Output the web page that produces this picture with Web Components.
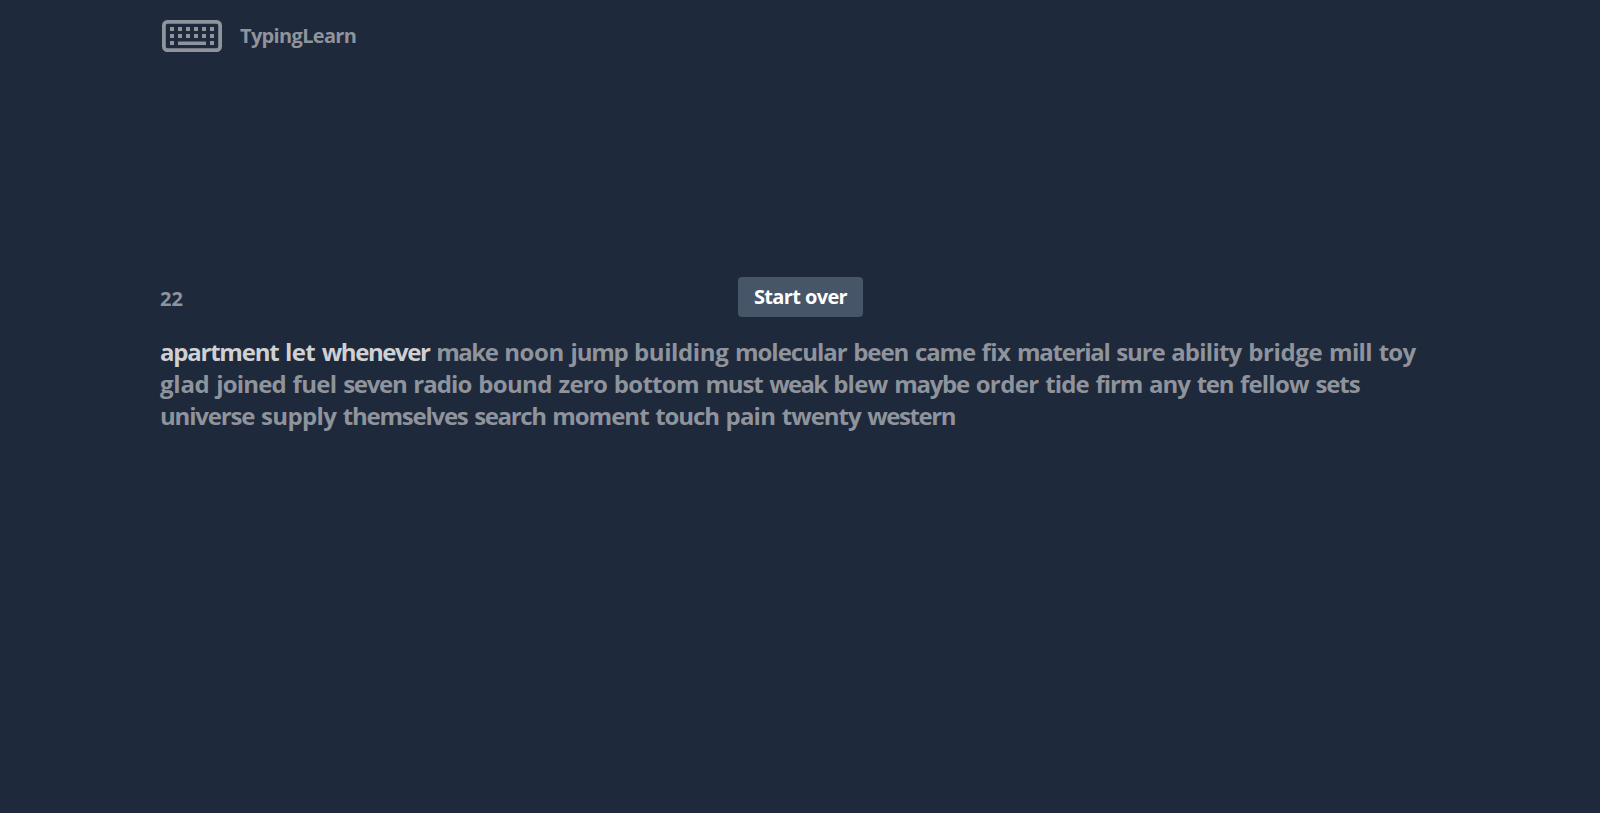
<!DOCTYPE html>
<html lang="en">
<head>
<meta charset="utf-8">
<title>TypingLearn</title>
<style>
html,body{margin:0;height:100%;background:#1e293b;overflow:hidden}
body{font-family:"Open Sans","Noto Sans",sans-serif;font-weight:700;color:#8f939b}
</style>
</head>
<body>
<typing-app></typing-app>
<script>
const define = (name, html, setup) => customElements.define(name, class extends HTMLElement {
  constructor() {
    super();
    const t = document.createElement('template');
    t.innerHTML = html;
    this.attachShadow({mode: 'open'}).append(t.content.cloneNode(true));
  }
  connectedCallback() { if (setup) setup(this); }
});

define('keyboard-icon', `
<style>:host{display:block;width:64px;height:40px}svg{display:block}</style>
<svg width="64" height="40" viewBox="0 0 64 40" fill="currentColor">
<rect x="3.9" y="5.9" width="56.2" height="28.2" rx="3.5" fill="none" stroke="currentColor" stroke-width="3.8"/>
<path d="M10 11h4v4h-4zM18 11h4v4h-4zM26 11h4v4h-4zM34 11h4v4h-4zM42 11h4v4h-4zM50 11h4v4h-4zM10 18h4v4h-4zM18 18h4v4h-4zM26 18h4v4h-4zM34 18h4v4h-4zM42 18h4v4h-4zM50 18h4v4h-4zM10 25h4v4h-4zM18 25.4h28v3.6H18zM50 25h4v4h-4z"/>
</svg>`);

define('app-header', `
<style>
:host{display:flex;align-items:center;gap:16px;height:72px}
.name{font-size:20px;line-height:28px;padding-bottom:1px;letter-spacing:-.67px}
</style>
<keyboard-icon></keyboard-icon><div class="name"><slot></slot></div>`);

define('start-button', `
<style>
:host{display:block}
button{display:block;box-sizing:border-box;width:125px;height:40px;padding:0 0 1px 1px;border:0;border-radius:4px;background:#475569;color:#fff;font:inherit;font-size:20px;line-height:39px;letter-spacing:-.63px;white-space:nowrap}
</style>
<button><slot></slot></button>`);

define('test-toolbar', `
<style>
:host{display:grid;grid-template-columns:1fr auto 1fr;height:40px;align-items:center}
.count{font-size:20px;line-height:28px;padding-top:3px}
</style>
<div class="count"><slot name="count"></slot></div><slot name="action"></slot>`);

// Each word takes the advance given in the line's "advances" list (px, trailing space included).
define('word-line', `
<style>
:host{display:block;font-size:24px;line-height:32px;height:32px}
div{white-space:nowrap}
span{display:inline-block;white-space:pre;vertical-align:top}
.typed{color:#cfd0d4}
</style><div></div>`, el => {
  const line = el.shadowRoot.querySelector('div');
  const advances = el.getAttribute('advances').split(' ').map(Number);
  const typed = Number(el.getAttribute('typed') || 0);
  el.getAttribute('words').split(' ').forEach((word, i) => {
    const s = document.createElement('span');
    s.textContent = word + ' ';
    if (i < typed) s.className = 'typed';
    line.append(s);
    const natural = s.getBoundingClientRect().width;
    s.style.letterSpacing = (advances[i] - natural - 0.4) / word.length + 'px';
    s.style.width = advances[i] + 'px';
  });
});

const lines = [
  ['apartment let whenever make noon jump building molecular been came fix material sure ability bridge mill toy',
   [159.6,285,321.7,436.2,504.2,570.6,634,735,853.2,915,981.6,1017,1116.4,1171.2,1248.2,1329,1378.8,1422]],
  ['glad joined fuel seven radio bound zero bottom must weak blew maybe order tide firm any ten fellow sets',
   [160,216.2,292.6,343.2,413.2,478.2,558.5,613.8,705.5,769.2,833.2,894.2,975.7,1045.2,1095.6,1149,1196.8,1240,1315.5,1366.2]],
  ['universe supply themselves search moment touch pain twenty western',
   [159.4,261,342.8,474.2,552.2,655.2,725.5,781.8,867.2,961.8]]
];
// The third line's fourth and fifth words start at 474.2 and 552.2; advances are differences of neighbours.
const rows = lines.map(([words, x], i) => `<word-line ${i ? '' : 'typed="3"'} words="${words}" advances="${
  x.slice(1).map((v, j) => (v - (j ? x[j] : 160)).toFixed(1)).join(' ')}"></word-line>`).join('');

define('typing-app', `
<style>
:host{display:block;padding:0 160px}
test-toolbar{margin-top:205px}
.words{margin-top:18.5px}
</style>
<app-header>TypingLearn</app-header>
<test-toolbar><span slot="count">22</span><start-button slot="action">Start over</start-button></test-toolbar>
<div class="words">${rows}</div>`);
</script>
</body>
</html>
